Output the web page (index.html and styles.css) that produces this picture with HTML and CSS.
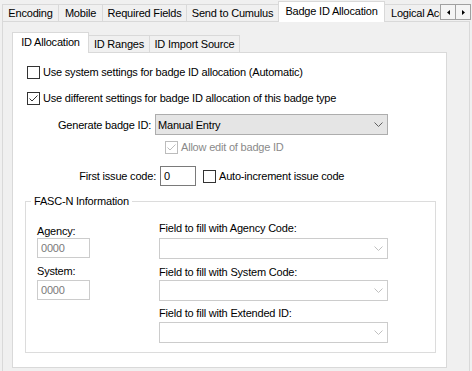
FILE: index.html
```html
<!DOCTYPE html>
<html lang="en">
  <head>
    <meta charset="UTF-8" />
    <title>Badge ID Allocation</title>
    <link rel="stylesheet" href="styles.css">
  </head>
  <body>
    <div class="window">
      <!-- outer tabs -->
      <div class="tabbar outer">
        <div class="tabs">
          <div class="tab t-enc">Encoding</div>
          <div class="tab t-mob">Mobile</div>
          <div class="tab t-req">Required Fields</div>
          <div class="tab t-cum">Send to Cumulus</div>
          <div class="tab active t-badge">Badge ID Allocation</div>
          <div class="tab t-log">Logical Access</div>
        </div>
        <div class="spin">
          <span class="spin-btn"><svg width="3" height="5" viewBox="0 0 3 5"><polygon points="3,0 0,2.5 3,5" fill="#000"/></svg></span>
          <span class="spin-btn"><svg width="3" height="5" viewBox="0 0 3 5"><polygon points="0,0 3,2.5 0,5" fill="#000"/></svg></span>
        </div>
      </div>

      <div class="page">
        <!-- inner tabs -->
        <div class="tabbar inner">
          <div class="tab active t-alloc">ID Allocation</div>
          <div class="tab t-rng">ID Ranges</div>
          <div class="tab t-imp">ID Import Source</div>
        </div>

        <div class="panel">
          <div class="check-row">
            <span class="box"></span>
            <span>Use system settings for badge ID allocation (Automatic)</span>
          </div>
          <div class="check-row row2">
            <span class="box"><svg width="11" height="11" viewBox="0 0 11 11"><polyline points="1.5,5.5 4,8 9.5,2.5" fill="none" stroke="#333" stroke-width="1"/></svg></span>
            <span>Use different settings for badge ID allocation of this badge type</span>
          </div>

          <div class="field-row gen">
            <span class="lbl lbl-gen">Generate badge ID:</span>
            <div class="combo">
              <span>Manual Entry</span>
              <svg class="chev" width="9" height="5" viewBox="0 0 9 5"><polyline points="0.5,0.5 4.5,4.5 8.5,0.5" fill="none" stroke="#606060" stroke-width="1"/></svg>
            </div>
          </div>

          <div class="check-row sub disabled">
            <span class="box"><svg width="11" height="11" viewBox="0 0 11 11"><polyline points="1.5,5.5 4,8 9.5,2.5" fill="none" stroke="#bcbcbc" stroke-width="1"/></svg></span>
            <span>Allow edit of badge ID</span>
          </div>

          <div class="field-row first">
            <span class="lbl lbl-first">First issue code:</span>
            <div class="textbox">0</div>
            <div class="check-inline">
              <span class="box"></span>
              <span>Auto-increment issue code</span>
            </div>
          </div>

          <fieldset class="group">
            <legend>FASC-N Information</legend>
            <div class="cols">
              <div class="col-left">
                <div class="flabel fl-agency">Agency:</div>
                <div class="textbox dis">0000</div>
                <div class="flabel fl-system">System:</div>
                <div class="textbox dis tb-system">0000</div>
              </div>
              <div class="col-right">
                <div class="flabel r1">Field to fill with Agency Code:</div>
                <div class="combo dis c1"><svg class="chev" width="9" height="5" viewBox="0 0 9 5"><polyline points="0.5,0.5 4.5,4.5 8.5,0.5" fill="none" stroke="#c0c0c0" stroke-width="1"/></svg></div>
                <div class="flabel r2">Field to fill with System Code:</div>
                <div class="combo dis c2"><svg class="chev" width="9" height="5" viewBox="0 0 9 5"><polyline points="0.5,0.5 4.5,4.5 8.5,0.5" fill="none" stroke="#c0c0c0" stroke-width="1"/></svg></div>
                <div class="flabel r3">Field to fill with Extended ID:</div>
                <div class="combo dis c3"><svg class="chev" width="9" height="5" viewBox="0 0 9 5"><polyline points="0.5,0.5 4.5,4.5 8.5,0.5" fill="none" stroke="#c0c0c0" stroke-width="1"/></svg></div>
              </div>
            </div>
          </fieldset>
        </div>
      </div>
    </div>
  </body>
</html>
```

FILE: styles.css
```css
/* reset */
* {
  margin: 0;
  padding: 0;
  box-sizing: border-box;
}
body {
  background: #f0f0f0;
  color: #000;
  font: 11px/14px 'Liberation Sans', Arial, sans-serif;
  letter-spacing: -0.2px;
}

.window {
  width: 472px;
  height: 371px;
  overflow: hidden;
}

/* tab strips */
.tabbar {
  height: 22px;
  margin-bottom: -1px;
  display: flex;
  align-items: flex-end;
}
.tabbar.outer {
  padding-left: 2px;
  align-items: stretch;
}
.tabs {
  flex: 1;
  display: flex;
  align-items: flex-end;
  overflow: hidden;
}
.tab {
  flex: none;
  height: 17px;
  margin-bottom: 1px;
  margin-left: -1px;
  border: 1px solid #d9d9d9;
  border-bottom: none;
  background: #f0f0f0;
  text-align: center;
  line-height: 16px;
  white-space: nowrap;
}
.tab:first-child {
  margin-left: 0;
}
.tab.active {
  height: 21px;
  margin-bottom: 0;
  background: #fff;
  line-height: 18px;
  position: relative;
  z-index: 1;
}

.t-enc { width: 57px; }
.t-mob { width: 45px; }
.t-req { width: 85px; }
.t-cum { width: 93px; }
.t-badge { width: 107px; }
.t-log { width: 80px; text-align: left; padding-left: 6px; }

.t-alloc { width: 77px; }
.t-rng { width: 62px; }
.t-imp { width: 91px; }

/* scroll arrows */
.spin {
  display: flex;
  margin: 4px 1px 0 0;
  height: 16px;
}
.spin-btn {
  width: 16px;
  height: 16px;
  border: 1px solid #a0a0a0;
  background: #f4f4f4;
  display: flex;
  align-items: center;
  justify-content: center;
}
.spin-btn + .spin-btn {
  margin-left: -1px;
}

/* outer page */
.page {
  margin-left: 2px;
  width: 468px;
  height: 360px;
  border: 1px solid #d9d9d9;
  background: #f0f0f0;
  padding: 9px 0 0 9px;
}

/* inner page */
.panel {
  width: 435px;
  height: 316px;
  border: 1px solid #d9d9d9;
  background: #fff;
  padding: 9px 0 0 12px;
}

/* checkboxes */
.box {
  flex: none;
  width: 13px;
  height: 13px;
  border: 1px solid #333;
  background: #fff;
  display: flex;
  align-items: center;
  justify-content: center;
}
.check-row {
  height: 20px;
  padding-left: 2px;
  display: flex;
  align-items: center;
  gap: 3px;
}
.row2 {
  margin-top: 6px;
}
.check-row.sub {
  margin-top: 2px;
  padding-left: 140px;
}
.disabled {
  color: #8a8a8a;
}
.disabled .box {
  border-color: #bcbcbc;
}
.check-inline {
  margin-left: 7px;
  display: flex;
  align-items: center;
  gap: 3px;
}

/* label + field rows */
.field-row {
  display: flex;
  align-items: center;
}
.field-row.gen {
  margin-top: 6px;
  height: 21px;
}
.field-row.first {
  margin-top: 9px;
  height: 20px;
}
.lbl {
  text-align: right;
  margin-right: 4px;
}
.lbl-gen { width: 126px; }
.lbl-first { width: 131px; }

.combo {
  width: 233px;
  height: 21px;
  border: 1px solid #adadad;
  background: #e5e5e5;
  padding-left: 2px;
  display: flex;
  align-items: center;
}
.combo .chev {
  margin-left: auto;
  margin-right: 4px;
}
.combo.dis {
  width: 229px;
  background: #fff;
  border-color: #cccccc;
}

.textbox {
  width: 36px;
  height: 20px;
  border: 1px solid #7a7a7a;
  background: #fff;
  padding-left: 3px;
  line-height: 18px;
}
.textbox.dis {
  width: 53px;
  border-color: #cccccc;
  color: #7a7a7a;
}

/* FASC-N group */
.group {
  margin-top: 9px;
  width: 411px;
  border: 1px solid #dcdcdc;
  padding: 0 0 9px 0;
}
.group legend {
  margin-left: 5px;
  padding: 0 3px;
  line-height: 13px;
}
.cols {
  display: flex;
}
.col-left {
  width: 122px;
  margin-left: 11px;
}
.col-right {
  width: 229px;
}
.flabel {
  height: 14px;
  white-space: nowrap;
}
.fl-agency { margin-top: 16px; }
.fl-system { margin-top: 6px; }
.tb-system { margin-top: 2px; }

.r1 { margin-top: 13px; }
.c1 { margin-top: 3px; }
.r2 { margin-top: 6px; }
.c2 { margin-top: 1px; }
.r3 { margin-top: 5px; }
.c3 { margin-top: 2px; }
```
